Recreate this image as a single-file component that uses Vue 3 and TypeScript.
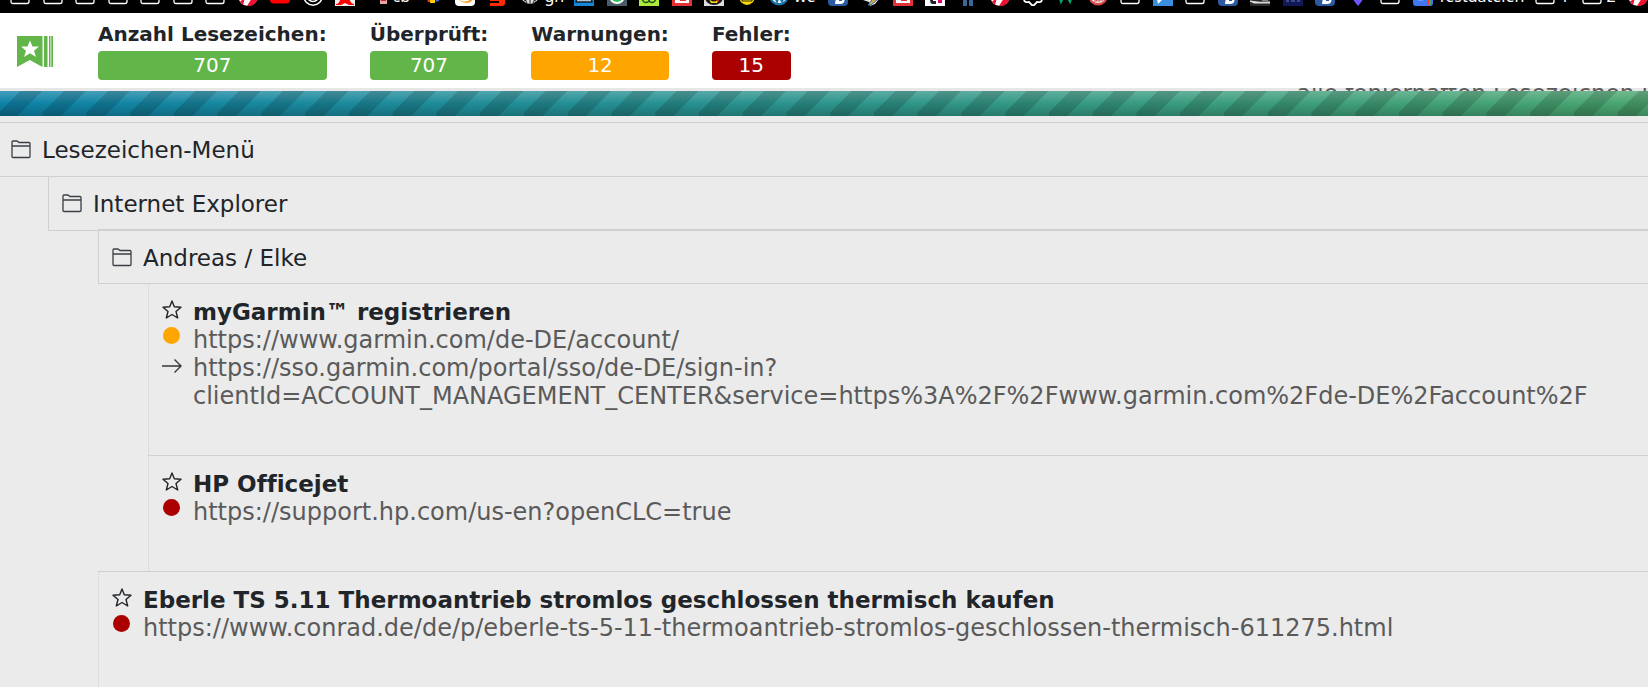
<script setup lang="ts">
interface Shortcut {
  icon: string
  label?: string
  size?: string
}

interface Stat {
  label: string
  value: number
  tone: 'ok' | 'warn' | 'error'
}

interface Entry {
  kind: 'folder' | 'bookmark'
  level: number
  title: string
  status?: 'warn' | 'error'
  url?: string
  redirect?: string[]
}

const folders = (n: number): Shortcut[] => Array.from({ length: n }, () => ({ icon: 'folder' }))

const shortcuts: Shortcut[] = [
  ...folders(7),
  { icon: 'swirl' },
  { icon: 'video' },
  { icon: 'smile' },
  { icon: 'letter' },
  { icon: 'doc', label: 'cb', size: 'short' },
  { icon: 'rainbow' },
  { icon: 'shop' },
  { icon: 'stripe' },
  { icon: 'globe', label: 'gh', size: 'short' },
  { icon: 'book' },
  { icon: 'phone' },
  { icon: 'loops' },
  { icon: 'redcard' },
  { icon: 'bug' },
  { icon: 'coin' },
  { icon: 'round', label: 'we', size: 'medium' },
  { icon: 'bee' },
  { icon: 'pencil' },
  { icon: 'redcard' },
  { icon: 'tel' },
  { icon: 'figure' },
  { icon: 'swirl' },
  { icon: 'gear' },
  { icon: 'peaks' },
  { icon: 'badge' },
  { icon: 'folder' },
  { icon: 'chat' },
  { icon: 'folder' },
  { icon: 'bee' },
  { icon: 'road' },
  { icon: 'navy' },
  { icon: 'bee' },
  { icon: 'gem' },
  { icon: 'folder' },
  { icon: 'files', label: 'Testdateien', size: 'long' },
  { icon: 'folder', label: '1', size: 'digit' },
  { icon: 'folder', label: '2', size: 'digit' },
  { icon: 'swirl' },
]

const stats: Stat[] = [
  { label: 'Anzahl Lesezeichen:', value: 707, tone: 'ok' },
  { label: 'Überprüft:', value: 707, tone: 'ok' },
  { label: 'Warnungen:', value: 12, tone: 'warn' },
  { label: 'Fehler:', value: 15, tone: 'error' },
]

const entries: Entry[] = [
  { kind: 'folder', level: 0, title: 'Lesezeichen-Menü' },
  { kind: 'folder', level: 1, title: 'Internet Explorer' },
  { kind: 'folder', level: 2, title: 'Andreas / Elke' },
  {
    kind: 'bookmark',
    level: 3,
    title: 'myGarmin™ registrieren',
    status: 'warn',
    url: 'https://www.garmin.com/de-DE/account/',
    redirect: [
      'https://sso.garmin.com/portal/sso/de-DE/sign-in?',
      'clientId=ACCOUNT_MANAGEMENT_CENTER&service=https%3A%2F%2Fwww.garmin.com%2Fde-DE%2Faccount%2F',
    ],
  },
  {
    kind: 'bookmark',
    level: 3,
    title: 'HP Officejet',
    status: 'error',
    url: 'https://support.hp.com/us-en?openCLC=true',
  },
  {
    kind: 'bookmark',
    level: 2,
    title: 'Eberle TS 5.11 Thermoantrieb stromlos geschlossen thermisch kaufen',
    status: 'error',
    url: 'https://www.conrad.de/de/p/eberle-ts-5-11-thermoantrieb-stromlos-geschlossen-thermisch-611275.html',
  },
]
</script>

<template>
  <div class="page">
    <nav class="shortcuts">
      <span v-for="(s, i) in shortcuts" :key="i" class="shortcut" :class="s.size">
        <svg class="shortcut-icon" viewBox="0 0 20 20" aria-hidden="true">
          <path v-if="s.icon === 'folder'" d="M1 3h18v12.500q0 2-2 2H3q-2 0-2-2z" fill="none" stroke="#fff" stroke-width="1.300" />
          <g v-else-if="s.icon === 'swirl'">
            <circle cx="10" cy="10.500" r="9.500" fill="#fff" />
            <path d="M2 15.500 7 12 5 19zM9 20l5-8h5.500q-1 7-8 8z" fill="#f10f32" />
          </g>
          <rect v-else-if="s.icon === 'video'" y="3" width="20" height="14.500" rx="4" fill="#f00" />
          <g v-else-if="s.icon === 'smile'" fill="none" stroke="#fff" stroke-width="1.500">
            <circle cx="10" cy="10" r="9.200" />
            <path d="M4 12q6 7 12 0M7 11q3 4 6 0" />
          </g>
          <g v-else-if="s.icon === 'letter'">
            <path d="M0 0h20v20H0z" fill="#eee" />
            <path d="M1 18q4 0 5-8h8q1 8 5 8v1h-5l-4-2-4 2H1z" fill="#f00" />
          </g>
          <g v-else-if="s.icon === 'doc'">
            <path d="M12 2h7v16h-7z" fill="#e9a6a6" />
            <path d="M13 10h5v5h-5z" fill="#c3272b" />
          </g>
          <g v-else-if="s.icon === 'rainbow'">
            <path d="M4 11h5v5H6z" fill="#e33" />
            <path d="M8 13h5v4H8z" fill="#fc0" />
            <path d="M12 11h5v4l-3 1z" fill="#36c" />
          </g>
          <g v-else-if="s.icon === 'shop'">
            <rect width="20" height="20" rx="4" fill="#fff" />
            <path d="M3 13q7 5 13 0l1 2q-7 5-14-2z" fill="#f79a1e" />
          </g>
          <g v-else-if="s.icon === 'stripe'" fill="#ff2a00">
            <path d="M3 8h15v9q0 3-3 3H3v-3h9v-2H3z" />
          </g>
          <g v-else-if="s.icon === 'globe'">
            <circle cx="10" cy="9" r="9" fill="#ddd" />
            <path d="M10 0v18M1 9h18M4 15q6-4 12 0M6 1q-4 9 1 16M14 1q4 9-1 16" fill="none" stroke="#222" stroke-width="1" />
          </g>
          <g v-else-if="s.icon === 'book'">
            <path d="M0 0h20v20H0z" fill="#1687d9" />
            <path d="M4 5h12l2 11H2z" fill="#b9c4cc" stroke="#123" stroke-width="1.500" />
          </g>
          <g v-else-if="s.icon === 'phone'">
            <path d="M0 0h20v20H0z" fill="#4a5c68" />
            <circle cx="10" cy="10" r="8" fill="#fff" />
            <circle cx="10" cy="10" r="6" fill="#25c55b" />
          </g>
          <g v-else-if="s.icon === 'loops'">
            <path d="M0 0h20v20H0z" fill="#b0e83b" />
            <g fill="none" stroke="#1f5a1f" stroke-width="1.500"><circle cx="7" cy="13" r="3.500" /><circle cx="13" cy="13" r="3.500" /></g>
          </g>
          <g v-else-if="s.icon === 'redcard'">
            <path d="M0 0h20v20H0z" fill="#e23338" />
            <path d="M3 8h14v9H3z" fill="#fff" />
            <path d="M8 13h6v2H8z" fill="#e23338" />
          </g>
          <g v-else-if="s.icon === 'bug'">
            <path d="M0 0h20v20H0z" fill="#ddd" />
            <ellipse cx="10" cy="11" rx="9" ry="8" fill="#171717" />
            <path d="M5 13q5 5 10 0l-2 4H7z" fill="#f3df10" />
            <path d="m12 14 4-1-2 3z" fill="#e22" />
          </g>
          <g v-else-if="s.icon === 'coin'">
            <ellipse cx="10" cy="10" rx="8" ry="9" fill="#f8d90b" />
            <path d="M5 12v3h10v-3" fill="none" stroke="#332d00" />
          </g>
          <g v-else-if="s.icon === 'round'">
            <circle cx="10" cy="10" r="9.500" fill="#1876ad" />
            <circle cx="10" cy="9" r="8" fill="#fff" />
            <path d="m4 7 4 8 2-5 3 5 3-8" fill="none" stroke="#1876ad" stroke-width="2.500" />
          </g>
          <g v-else-if="s.icon === 'bee'">
            <rect width="20" height="20" rx="4" fill="#2b5aa0" />
            <path d="M9 4h6q4 3 1 7 2 7-4 7H7z" fill="#fff" />
            <path d="M11 12h3v3h-3z" fill="#2b5aa0" />
          </g>
          <g v-else-if="s.icon === 'pencil'">
            <path d="M0 13h19l-4 5-5 2-1-4z" fill="#e6e6e6" />
            <path d="m8 19 7-9 3 3-7 6z" fill="#d5a646" stroke="#2c68a5" />
          </g>
          <g v-else-if="s.icon === 'tel'">
            <path d="M0 0h20v20H0z" fill="#fff" />
            <path d="M5 9h3v6h3v3H7q-2-1-2-4z" fill="#222" />
            <path d="M13 13h4v4h-4z" fill="#e20074" />
          </g>
          <path v-else-if="s.icon === 'figure'" d="M5 4h10v16h-4v-7h-2v7H5z" fill="#386798" />
          <path v-else-if="s.icon === 'gear'" d="M1 13q0 4 5 3l2 2q2 3 4 0l2-2q5 1 5-3l-2-4H3z" fill="none" stroke="#fff" stroke-width="1.800" />
          <path v-else-if="s.icon === 'peaks'" d="m4 10 2 6 3-6 3 0 3 6 2-6" fill="none" stroke="#00a86b" stroke-width="2" />
          <g v-else-if="s.icon === 'badge'">
            <circle cx="10" cy="10" r="9.500" fill="#dc4949" />
            <circle cx="10" cy="9" r="8" fill="#eee" />
            <path d="M5 12h4v3H6m5 1v-5h4v3h-3" fill="none" stroke="#bd3030" />
          </g>
          <g v-else-if="s.icon === 'chat'">
            <path d="M0 0h20v20H0z" fill="#398ee0" />
            <path d="M4 13h9l-4 1-4 4z" fill="#fff" />
          </g>
          <g v-else-if="s.icon === 'road'">
            <path d="M0 0h20v20H0z" fill="#292929" />
            <path d="M0 15q9 2 20 1v1H4zM2 13h4M12 14h6" stroke="#ddd" fill="#ddd" />
          </g>
          <g v-else-if="s.icon === 'navy'">
            <path d="M0 0h20v20H0z" fill="#111858" />
            <path d="M3 15h3M8 15h4M14 15h3" stroke="#6977ad" />
          </g>
          <path v-else-if="s.icon === 'gem'" d="m5 10h10l-1 5-4 5-4-5z" fill="#6b55ff" />
          <g v-else>
            <rect width="20" height="20" rx="3" fill="#3d78f2" />
            <path d="M14 10h2v9h-2z" fill="#f33" />
            <path d="M16 10h2v9h-2z" fill="#4a5" />
            <path d="M5 14h5" stroke="#9dbcff" />
          </g>
        </svg>
        <span v-if="s.label" class="shortcut-label">{{ s.label }}</span>
      </span>
    </nav>

    <header class="header">
      <svg class="logo" viewBox="0 0 36 31" aria-hidden="true">
        <path d="M0 0h25.500v31l-12.700-7L0 31zM27 0h3.500v31H27zM32 0h1.500v31H32zM34.300 0H36v31h-1.700z" fill="#62b548" />
        <path d="m13 4.500 2.500 6h6.500l-5 4.200 2 6.300-6-3.800-6 3.800 2-6.300-5-4.200h6.500z" fill="#fff" />
      </svg>
      <dl class="stats">
        <div v-for="s in stats" :key="s.label" class="stat">
          <dt class="stat-label">{{ s.label }}</dt>
          <dd class="stat-value" :class="s.tone">{{ s.value }}</dd>
        </div>
      </dl>
    </header>

    <div class="hint"><span class="hint-text">alle fehlerhaften Lesezeichen l</span></div>
    <div class="progress" role="progressbar" aria-label="Überprüft" aria-valuenow="707" aria-valuemax="707"></div>

    <ul class="list">
      <li v-for="e in entries" :key="e.title" class="entry" :class="[e.kind, 'level-' + e.level]">
        <template v-if="e.kind === 'folder'">
          <svg class="icon" viewBox="0 0 20 20" aria-hidden="true">
            <path d="M1 17.500V3q0-1 1-1h4l2 1.500h10q1 0 1 1v13q0 1-1 1H2q-1 0-1-1zM1 7h18" fill="none" stroke="#3b3f44" stroke-width="1.300" />
          </svg>
          <span class="name">{{ e.title }}</span>
        </template>
        <template v-else>
          <svg class="icon" viewBox="0 0 20 20" aria-hidden="true">
            <path d="m10 2 2.300 5.800 6.700.500-5 4.200 1.700 6.500-5.700-3.500L4.300 19 6 12.500 1 8.300l6.700-.500z" fill="none" stroke="#212529" stroke-width="1.400" stroke-linejoin="round" />
          </svg>
          <strong class="title">{{ e.title }}</strong>
          <span class="dot" :class="e.status"></span>
          <a class="url" :href="e.url">{{ e.url }}</a>
          <template v-if="e.redirect">
            <svg class="icon" viewBox="0 0 20 20" aria-hidden="true">
              <path d="M0 11h19M12.500 4.500 19 11l-6.500 6.500" fill="none" stroke="#33383c" stroke-width="1.400" />
            </svg>
            <a class="url" :href="e.redirect.join('')"><span v-for="part in e.redirect" :key="part" class="part">{{ part }}</span></a>
          </template>
        </template>
      </li>
    </ul>
  </div>
</template>

<style>
body {
  background: #ebebeb;
  overflow: hidden;
}
</style>

<style scoped>
.page {
  font-family: Verdana, "DejaVu Sans", sans-serif;
  font-variant-ligatures: none;
  color: #212529;
  height: 100vh;
  overflow: hidden;
}

.shortcuts {
  display: flex;
  justify-content: space-between;
  align-items: flex-end;
  height: 6px;
  padding: 0 0 7px 10px;
  overflow: hidden;
  background: #000;
  color: #fff;
  font: 16px/20px "Noto Sans", sans-serif;
}

.shortcut {
  display: flex;
  flex: none;
  gap: 5px;
  width: 20px;
  white-space: nowrap;
}

.shortcut.short { width: 42px; }
.shortcut.medium { width: 46px; }
.shortcut.long { width: 110px; }
.shortcut.digit { width: 34px; }

.shortcut-icon {
  flex: none;
  width: 20px;
  height: 20px;
}

.header {
  display: flex;
  align-items: center;
  gap: 45px;
  padding: 8px 17px;
  background: #fff;
}

.logo {
  flex: none;
  width: 36px;
  height: 31px;
  margin-top: 2px;
}

.stats {
  display: flex;
  gap: 43px;
  margin: 0;
}

.stat {
  display: flex;
  flex-direction: column;
  gap: 4px;
  font-size: 20px;
}

.stat-label {
  font-weight: 700;
  line-height: 26px;
  white-space: nowrap;
}

.stat-value {
  margin: 0;
  border-radius: 4px;
  color: #fff;
  line-height: 29px;
  text-align: center;
}

.ok { background: #62b548; }
.warn { background: #ffa500; }
.error { background: #aa0000; }

.hint {
  display: flex;
  justify-content: flex-end;
  height: 3px;
  overflow: hidden;
  background: #e7e7e7;
  color: #5a5a5a;
  font-size: 23px;
  line-height: 22px;
}

.hint-text {
  margin-top: -6px;
  white-space: nowrap;
}

.progress {
  height: 25px;
  background-image:
    linear-gradient(135deg, transparent 25%, rgba(0, 0, 0, 0.15) 25%, rgba(0, 0, 0, 0.15) 50%, transparent 50%),
    linear-gradient(rgba(255, 255, 255, 0.22), transparent 50%, rgba(0, 0, 0, 0.2)),
    linear-gradient(90deg, #0e82a8, #4aa66f);
  background-size: calc(175px / 4) calc(175px / 4), auto, auto;
  background-position: -1px 0, 0 0, 0 0;
}

.list {
  margin: 6px 0 0;
  padding: 0;
  list-style: none;
  font-size: 23px;
  line-height: 28px;
}

.entry {
  display: grid;
  grid-template-columns: 20px 1fr;
  column-gap: 11px;
  align-items: start;
}

.folder {
  padding: 13px 13px 12px;
  border-bottom: 1px solid #cfd0d1;
  border-left: 1px solid #cfd0d1;
}

.bookmark {
  padding: 14px 13px 45px;
  border-left: 1px dotted #cfd0d1;
}

.bookmark + .bookmark {
  border-top: 1px solid #cfd0d1;
}

.level-0 {
  padding-left: 11px;
  border-top: 1px solid #cfd0d1;
  border-left: 0;
}

.level-1 { margin-left: 48px; }
.level-2 { margin-left: 98px; }
.level-3 { margin-left: 148px; }

.folder.level-2 {
  margin-top: -2px;
  padding-top: 14px;
  padding-bottom: 11px;
  border-top: 1px solid #cfd0d1;
}

.icon {
  width: 20px;
  height: 20px;
  margin-top: 1px;
}

.folder .icon {
  margin-top: 3px;
}

.dot {
  width: 17px;
  height: 17px;
  margin: 1px;
  border-radius: 50%;
}

.url {
  color: #5a5a5a;
  font-size: 24px;
  text-decoration: none;
}

.part {
  display: inline-block;
  overflow-wrap: anywhere;
}
</style>
